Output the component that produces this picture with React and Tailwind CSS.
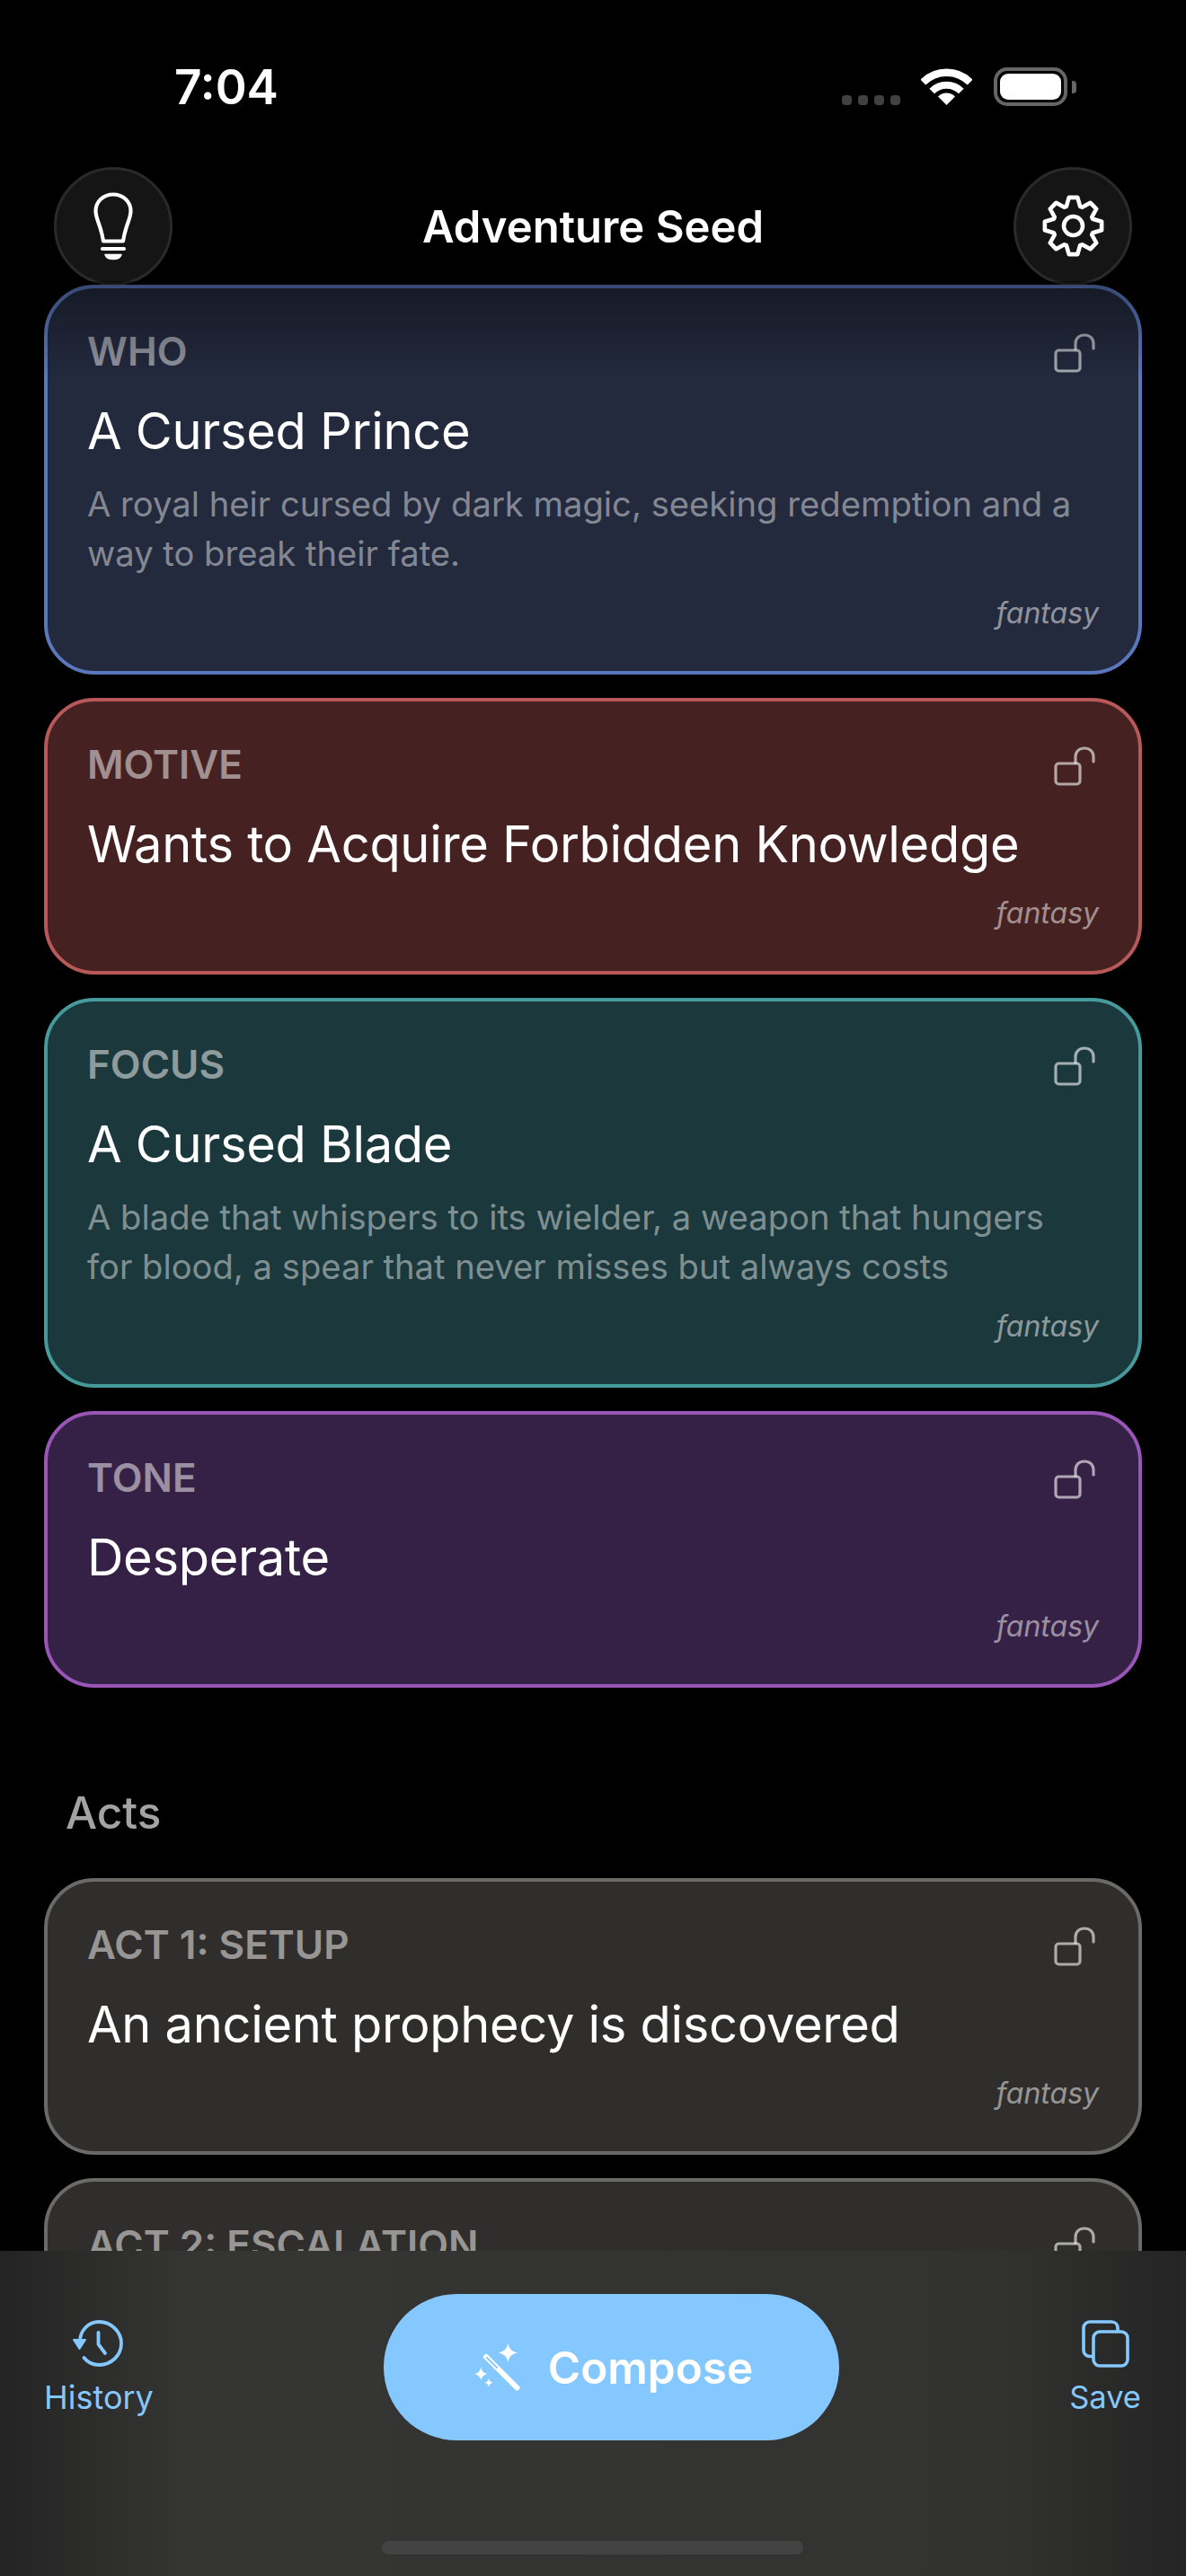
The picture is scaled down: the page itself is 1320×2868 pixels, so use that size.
const sans = 'font-["Inter","Liberation_Sans",sans-serif]';

const SEED_CARDS = [
  {
    label: 'WHO',
    title: 'A Cursed Prince',
    desc: 'A royal heir cursed by dark magic, seeking redemption and a way to break their fate.',
    tone: 'border-[#5a77bd] bg-[#232a3e]',
  },
  {
    label: 'MOTIVE',
    title: 'Wants to Acquire Forbidden Knowledge',
    tone: 'border-[#b85858] bg-[#462121]',
  },
  {
    label: 'FOCUS',
    title: 'A Cursed Blade',
    desc: 'A blade that whispers to its wielder, a weapon that hungers for blood, a spear that never misses but always costs',
    tone: 'border-[#459a9c] bg-[#1b383c]',
  },
  {
    label: 'TONE',
    title: 'Desperate',
    tone: 'border-[#9a55b8] bg-[#362146]',
  },
];

const ACT_CARDS = [
  { label: 'ACT 1: SETUP', title: 'An ancient prophecy is discovered', tone: 'border-[#6b6a66] bg-[#2f2e2c]' },
  { label: 'ACT 2: ESCALATION', title: 'The stakes are raised', tone: 'border-[#6b6a66] bg-[#2f2e2c]' },
];

// eight rounded teeth, one pointing straight up
function gearPath() {
  const pts = [];
  for (let i = 0; i < 8; i++) {
    const a = (i * Math.PI) / 4 - Math.PI / 2;
    [[-0.34, 23], [-0.15, 32], [0.15, 32], [0.34, 23]].forEach(([d, r]) => {
      pts.push(`${(34.5 + r * Math.cos(a + d)).toFixed(2)} ${(34.5 + r * Math.sin(a + d)).toFixed(2)}`);
    });
  }
  return `M${pts.join('L')}Z`;
}

function sparkle(cx, cy, r) {
  const k = r * 0.14;
  return `M${cx} ${cy - r}Q${cx + k} ${cy - k} ${cx + r} ${cy}Q${cx + k} ${cy + k} ${cx} ${cy + r}Q${cx - k} ${cy + k} ${cx - r} ${cy}Q${cx - k} ${cy - k} ${cx} ${cy - r}Z`;
}

function LockIcon() {
  return (
    <svg width="46" height="44" viewBox="0 0 46 44" fill="none" stroke="currentColor" strokeWidth="3.2" strokeLinecap="round" strokeLinejoin="round">
      <rect x="2" y="19" width="27" height="23" rx="3.5" />
      <path d="M24 18V11.5C24 6 28 2 34 2C40 2 44 6 44 11.5V17" />
    </svg>
  );
}

function Card({ label, title, desc, tone }) {
  return (
    <div className={`relative rounded-[56px] border-4 pl-[44px] pr-[44px] pt-[44px] pb-[42px] ${tone}`}>
      <div className="h-[52px] text-[44px] leading-[52px] font-semibold text-white/50">{label}</div>
      <div className="absolute right-[48px] top-[50px] text-white/60">
        <LockIcon />
      </div>
      <div className="mt-[27px] h-[72px] text-[56px] leading-[72px] tracking-[-0.3px] text-white">{title}</div>
      {desc && (
        <div className="mt-[18px] pr-[20px] text-[38.2px] leading-[54.5px] text-white/45">{desc}</div>
      )}
      <div className={`h-[44px] text-right text-[32px] leading-[44px] italic text-white/50 ${desc ? 'mt-[18px]' : 'mt-[19px]'}`}>fantasy</div>
    </div>
  );
}

export default function App() {
  return (
    <div className={`relative h-[2868px] w-[1320px] overflow-hidden bg-black ${sans}`}>
      {/* Status bar */}
      <div className="flex h-[186px] items-start justify-between pl-[194px] pr-[122px] pt-[66px]">
        <div className="text-[53px] leading-[62px] font-semibold text-white">7:04</div>
        <div className="mt-[9px] flex items-end">
          <div className="mb-px flex gap-[7px]">
            <div className="h-[11px] w-[11px] rounded-[4px] bg-[#414141]" />
            <div className="h-[11px] w-[11px] rounded-[4px] bg-[#414141]" />
            <div className="h-[11px] w-[11px] rounded-[4px] bg-[#414141]" />
            <div className="h-[11px] w-[11px] rounded-[4px] bg-[#414141]" />
          </div>
          <svg className="ml-[23px]" width="57" height="42" viewBox="0 0 57 42" fill="none" stroke="white">
            <path d="M2.3 15.6A37 37 0 0 1 54.7 15.6" strokeWidth="8.5" />
            <path d="M12.2 25.5A23 23 0 0 1 44.8 25.5" strokeWidth="8" />
            <path d="M19 31.5A13.4 13.4 0 0 1 38 31.5L28.5 41Z" fill="white" stroke="none" />
          </svg>
          <div className="ml-[24px] flex items-center">
            <div className="h-[43px] w-[82px] rounded-[15px] border-[4px] border-[#666666] p-[3px]">
              <div className="h-full w-full rounded-[9px] bg-white" />
            </div>
            <div className="ml-[5px] h-[14px] w-[5px] rounded-r-[4px] bg-[#666666]" />
          </div>
        </div>
      </div>

      {/* Header */}
      <div className="flex h-[131px] items-center justify-between px-[60px]">
        <button className="flex h-[132px] w-[132px] items-center justify-center rounded-full border-[3px] border-[#2a2a2a] bg-[#151515]">
          <svg className="mt-[1px]" width="44" height="76" viewBox="0 0 44 76" fill="none" stroke="white" strokeWidth="4.2" strokeLinecap="round" strokeLinejoin="round">
            <path d="M22 2.5C11 2.5 2.5 10.5 2.5 21C2.5 30 8.5 37 11 54.5H33C35.5 37 41.5 30 41.5 21C41.5 10.5 33 2.5 22 2.5Z" />
            <path d="M10 63H34" />
            <path d="M13 69.5H31C30 73 26.5 74.5 22 74.5C17.5 74.5 14 73 13 69.5Z" fill="white" strokeWidth="1.5" />
          </svg>
        </button>
        <div className="mt-[2px] text-[49px] leading-[62px] font-semibold text-white">Adventure Seed</div>
        <button className="flex h-[132px] w-[132px] items-center justify-center rounded-full border-[3px] border-[#2a2a2a] bg-[#151515]">
          <svg width="69" height="69" viewBox="0 0 69 69" fill="none" stroke="white" strokeWidth="4.6" strokeLinejoin="round">
            <path d={gearPath()} />
            <circle cx="34.5" cy="34.5" r="10.5" />
          </svg>
        </button>
      </div>

      {/* Cards */}
      <div className="relative px-[49px]">
        <div className="flex flex-col gap-[26px]">
          {SEED_CARDS.map((c) => (
            <Card key={c.label} {...c} />
          ))}
        </div>
        <div className="mb-[43px] mt-[109px] pl-[24px] text-[49.5px] leading-[60px] font-medium text-[#a3a3a3]">Acts</div>
        <div className="flex flex-col gap-[26px]">
          {ACT_CARDS.map((c) => (
            <Card key={c.label} {...c} />
          ))}
        </div>
        {/* scroll edge fade */}
        <div className="absolute inset-x-0 -top-[4px] h-[110px] bg-gradient-to-b from-black/40 to-transparent" />
      </div>

      {/* Bottom bar */}
      <div className="absolute inset-x-0 bottom-0 flex h-[362px] flex-col bg-[linear-gradient(90deg,#242424,#353534_16%,#323231_84%,#242424)] pb-[24px] pl-[49px] pr-[50px]">
        <div className="flex items-start justify-between">
          <button className="mt-[77px] flex flex-col items-center text-[#84c8ff]">
            <svg className="-ml-[2px]" width="58" height="52" viewBox="0 0 58 52" fill="none" stroke="currentColor" strokeWidth="3.8" strokeLinecap="round" strokeLinejoin="round">
              <path d="M9 24C9 12 18 2 30.5 2C42.5 2 55 12 55 26C55 40 43 50 30.5 50C23.5 50 17.5 47 13.5 42" />
              <path d="M2 22H15L8.5 32Z" fill="currentColor" strokeWidth="2" />
              <path d="M29.5 14V27L37 37" />
            </svg>
            <div className="mt-[12px] text-[36px] leading-[44px]">History</div>
          </button>
          <button className="mt-[48px] flex h-[163px] w-[507px] items-center justify-center gap-[31px] rounded-[82px] bg-[#84c8ff] pl-[4px] text-white">
            <svg width="52" height="54" viewBox="0 0 52 54" fill="white">
              <path d={sparkle(38.3, 10.5, 10.5)} />
              <path d={sparkle(8.3, 34, 7.5)} />
              <path d={sparkle(17, 43.7, 5)} />
              <path d="M14 15L48.5 49.5" stroke="white" strokeWidth="6" strokeLinecap="round" />
              <path d="M15 16L26 27" stroke="#84c8ff" strokeWidth="1.8" strokeLinecap="round" />
            </svg>
            <span className="text-[49.5px] leading-[62px] font-semibold">Compose</span>
          </button>
          <button className="mt-[77px] flex flex-col items-center text-[#84c8ff]">
            <svg width="53" height="53" viewBox="0 0 53 53" fill="none" stroke="currentColor" strokeWidth="3.6" strokeLinecap="round" strokeLinejoin="round">
              <path d="M12 40.5H9C5 40.5 2 37.5 2 33.5V9C2 5 5 2 9 2H33C37 2 40 5 40 9V12" />
              <rect x="13" y="13" width="38" height="38" rx="7" />
            </svg>
            <div className="mt-[11px] text-[34.5px] leading-[44px]">Save</div>
          </button>
        </div>
        <div className="mt-auto h-[15px] w-[469px] self-center rounded-[7px] bg-[#434343]" />
      </div>
    </div>
  );
}
